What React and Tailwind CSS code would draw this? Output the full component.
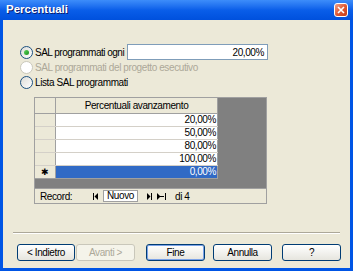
import React from 'react';

const rows = ['20,00%', '50,00%', '80,00%', '100,00%'];

const Radio = ({ checked, disabled }) => (
    <span
        className={`relative inline-block w-[13px] h-[13px] rounded-full border shrink-0 ${
            disabled ? 'border-[#cac8bb] bg-white' : 'border-[#1c5180] bg-gradient-to-br from-[#dcdcd7] to-white'
        }`}
    >
        {checked && (
            <span className="absolute left-[3px] top-[3px] w-[5px] h-[5px] rounded-full bg-gradient-to-br from-[#5ad55a] to-[#17901b]" />
        )}
    </span>
);

const XpButton = ({ children, disabled, isDefault, className }) => (
    <div
        className={`h-[17px] rounded-[3px] border flex items-center justify-center ${
            disabled
                ? 'border-[#c9c7ba] text-[#aca899] bg-[#f5f4ea]'
                : 'border-[#003c74] text-black bg-gradient-to-b from-white to-[#e6e5de]'
        } ${isDefault ? 'shadow-[inset_0_0_0_1px_#7ba2e7]' : ''} ${className || ''}`}
    >
        {children}
    </div>
);

// small navigation glyph: bar + triangle(s)
const NavIcon = ({ kind }) => (
    <svg width="10" height="7" viewBox="0 0 10 7" className="shrink-0">
        {kind === 'first' && (
            <>
                <rect x="1" y="0" width="1" height="7" fill="#000" />
                <polygon points="6,0 6,7 2.5,3.5" fill="#000" />
            </>
        )}
        {kind === 'next' && (
            <>
                <polygon points="1,0 1,7 4.5,3.5" fill="#000" />
                <rect x="5" y="0" width="1" height="7" fill="#000" />
            </>
        )}
        {kind === 'new' && (
            <>
                <polygon points="0,0 0,7 3.5,3.5" fill="#000" />
                <rect x="3" y="3" width="4" height="1" fill="#000" />
                <rect x="8" y="0" width="1" height="7" fill="#000" />
            </>
        )}
    </svg>
);

const App = () => {
    return (
        <div className="w-[353px] h-[271px] flex flex-col bg-[#0055e5] font-['Liberation_Sans',Arial,sans-serif] text-[10px] tracking-[-0.4px] text-black overflow-hidden whitespace-nowrap">
            {/* title bar */}
            <div className="h-[20px] flex items-center justify-between pl-[6px] pr-[5px] bg-gradient-to-b from-[#3d8dfa] via-[#0a5ee9] to-[#0050dd]">
                <span className="text-white font-bold text-[11.5px] tracking-normal [text-shadow:1px_1px_0_#0a1e73]">Percentuali</span>
                <div className="w-[14px] h-[14px] rounded-[3px] border border-white bg-gradient-to-br from-[#f0a088] via-[#e05a34] to-[#c23a14] flex items-center justify-center">
                    <svg width="8" height="8" viewBox="0 0 8 8">
                        <path d="M1 1 L7 7 M7 1 L1 7" stroke="#fff" strokeWidth="1.6" />
                    </svg>
                </div>
            </div>

            {/* body */}
            <div className="flex-1 mx-[3px] mb-[3px] bg-[#ece9d8] flex flex-col pl-[17px] pr-[8px]">
                <div className="mt-[24px] h-[16px] flex items-center">
                    <Radio checked />
                    <span className="w-[94px] pl-[2px] tracking-[-0.5px]">SAL programmati ogni</span>
                    <div className="w-[141px] h-[16px] border border-[#7f9db9] bg-white flex items-center justify-end pr-[3px]">
                        20,00%
                    </div>
                </div>
                <div className="h-[15px] flex items-center">
                    <Radio disabled />
                    <span className="pl-[2px] text-[#aca899]">SAL programmati del progetto esecutivo</span>
                </div>
                <div className="h-[15px] flex items-center">
                    <Radio />
                    <span className="pl-[2px]">Lista SAL programmati</span>
                </div>

                {/* datasheet */}
                <div className="mt-[7px] ml-[14px] w-[233px] border border-[#a0a0a0] flex flex-col">
                    <div className="flex bg-[#808080] h-[90px]">
                        <div className="w-[183px] flex flex-col">
                            <div className="h-[16px] flex bg-[#ece9d8] border-b border-[#a0a0a0]">
                                <div className="w-[21px] border-r border-[#a0a0a0]" />
                                <div className="flex-1 flex items-center justify-center border-r border-[#a0a0a0]">
                                    Percentuali avanzamento
                                </div>
                            </div>
                            {rows.map(r => (
                                <div key={r} className="h-[13px] flex border-b border-[#d4d0c8]">
                                    <div className="w-[21px] bg-[#ece9d8] border-r border-[#a0a0a0]" />
                                    <div className="flex-1 bg-white flex items-center justify-end pr-[1px] leading-none border-r border-[#a0a0a0]">
                                        {r}
                                    </div>
                                </div>
                            ))}
                            <div className="h-[13px] flex border-b border-[#a0a0a0]">
                                <div className="w-[21px] bg-[#ece9d8] border-r border-[#a0a0a0] flex items-center justify-center text-[9px] leading-none">
                                    ✱
                                </div>
                                <div className="flex-1 bg-[#316ac5] text-white flex items-center justify-end pr-[1px] leading-none border-r border-[#a0a0a0]">
                                    0,00%
                                </div>
                            </div>
                        </div>
                    </div>
                    <div className="h-[15px] bg-[#ece9d8] border-t border-[#a0a0a0] flex items-center pl-[5px]">
                        <span className="w-[52px]">Record:</span>
                        <NavIcon kind="first" />
                        <div className="ml-[1px] w-[35px] h-[12px] bg-white border border-[#a0a0a0] flex items-center justify-center leading-none">
                            Nuovo
                        </div>
                        <span className="ml-[8px] flex"><NavIcon kind="next" /></span>
                        <span className="ml-[1px] flex"><NavIcon kind="new" /></span>
                        <span className="ml-[8px]">di 4</span>
                    </div>
                </div>

                {/* separator */}
                <div className="mt-[28px] -ml-[7px] mr-[2px] border-t border-[#aca899] border-b border-b-white" />

                {/* buttons */}
                <div className="mt-[10px] flex items-center">
                    <XpButton className="w-[58px] -ml-[3px]">&lt; Indietro</XpButton>
                    <XpButton className="w-[59px] ml-[1px]" disabled>Avanti &gt;</XpButton>
                    <XpButton className="w-[59px] ml-[11px]" isDefault>Fine</XpButton>
                    <XpButton className="w-[59px] ml-[8px]">Annulla</XpButton>
                    <XpButton className="w-[59px] ml-[10px]">?</XpButton>
                </div>
            </div>
        </div>
    );
};

export default App;
